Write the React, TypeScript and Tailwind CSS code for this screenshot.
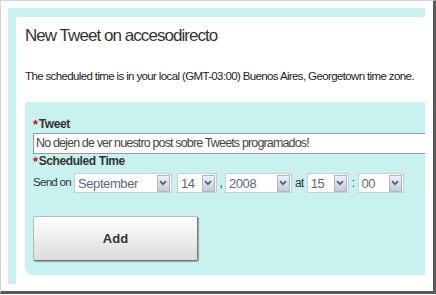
import React from "react";

const font = { fontFamily: '"Liberation Sans", Arial, sans-serif' };

function Arrow() {
  return (
    <span className="flex h-[17px] w-[13px] items-center justify-center border border-[#a9b6c8] bg-gradient-to-b from-[#eef1f6] to-[#c3cbd8]">
      <svg width="8" height="6" viewBox="0 0 8 6">
        <path d="M1 1.2 L4 4.2 L7 1.2" fill="none" stroke="#4d6185" strokeWidth="1.8" />
      </svg>
    </span>
  );
}

function Select({ value, width }: { value: string; width: string }) {
  return (
    <div className={`flex h-[20px] items-center justify-between border border-[#c9cfd6] bg-white pl-[3px] pr-[1px] ${width}`}>
      <span className="text-[13px] leading-none tracking-[-0.4px] text-[#5a6a80]">{value}</span>
      <Arrow />
    </div>
  );
}

export default function App() {
  return (
    <div style={font} className="h-[295px] w-[436px] bg-white">
      <div className="h-[294px] w-[436px] border-t border-l border-[#d4d4d4] border-r-[3px] border-b-[3px] border-r-[#5a5a5a] border-b-[#5a5a5a] p-[7px] pr-[8px]">
        <div className="flex h-full flex-col border-t-[9px] border-l-[8px] border-[#c8f1f0] bg-white">
          <h1 className="whitespace-nowrap pl-[9px] pt-[9px] text-[17px] leading-[20px] tracking-[-0.95px] text-[#333]">
            New Tweet on accesodirecto
          </h1>
          <p className="whitespace-nowrap pl-[9px] pt-[23px] text-[11.5px] leading-[14px] tracking-[-0.63px] text-[#222]">
            The scheduled time is in your local (GMT-03:00) Buenos Aires, Georgetown time zone.
          </p>
          <div className="mt-[19px] mb-[9px] ml-[9px] flex flex-1 flex-col rounded-bl-[8px] rounded-tl-[3px] bg-[#c8f1f0] pl-[8px] pt-[15px]">
            <div className="flex items-center text-[12px] font-bold leading-[15px] tracking-[-0.4px] text-[#333]">
              <span className="mr-[1px] text-[13px] text-[#c01818]">*</span>Tweet
            </div>
            <div className="mt-[1px] flex h-[21px] items-center whitespace-nowrap border border-r-0 border-[#9a9a9a] bg-white pl-[2px] text-[12.5px] tracking-[-0.85px] text-[#444]">
              No dejen de ver nuestro post sobre Tweets programados!
            </div>
            <div className="flex items-center text-[12px] font-bold leading-[15px] tracking-[-0.4px] text-[#333]">
              <span className="mr-[1px] text-[13px] text-[#c01818]">*</span>Scheduled Time
            </div>
            <div className="mt-[4px] flex items-center text-[12px] tracking-[-0.6px] text-[#333]">
              <span className="mr-[3px] text-[11.5px] tracking-[-0.7px]">Send on</span>
              <Select value="September" width="w-[98px]" />
              <span className="w-[5px]" />
              <Select value="14" width="w-[40px]" />
              <span className="mx-[2px] w-[4px] text-center">,</span>
              <Select value="2008" width="w-[67px]" />
              <span className="mx-[3px]">at</span>
              <Select value="15" width="w-[42px]" />
              <span className="mx-[3px]">:</span>
              <Select value="00" width="w-[46px]" />
            </div>
            <button className="mt-[23px] h-[45px] w-[165px] rounded-[2px] border border-[#b8b8b8] border-r-[#7a7a7a] border-b-[#6f6f6f] bg-gradient-to-b from-white to-[#dcdcdc] text-[13px] font-bold text-[#333] shadow-[1px_1px_1px_rgba(0,0,0,0.3)]">
              Add
            </button>
          </div>
        </div>
      </div>
    </div>
  );
}
